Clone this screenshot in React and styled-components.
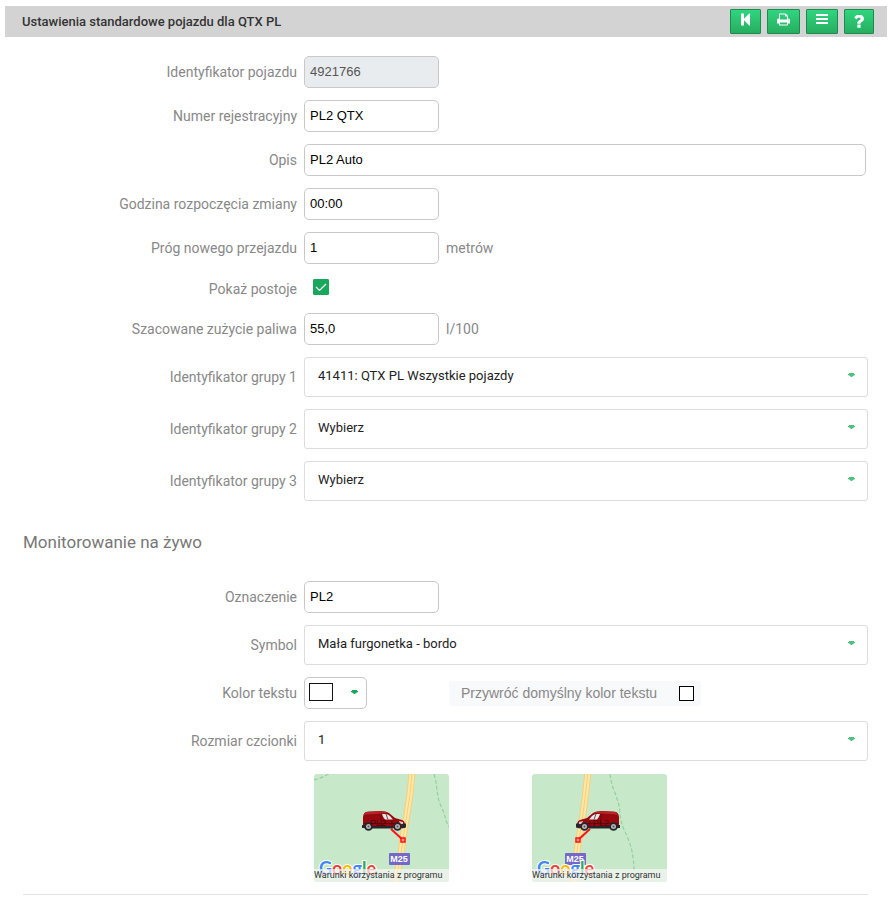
import React from 'react'
import styled, { createGlobalStyle } from 'styled-components'

const GlobalStyle = createGlobalStyle`
  * {
    box-sizing: border-box;
  }
  body {
    margin: 0;
    background: #fff;
    font-family: Roboto, 'Liberation Sans', sans-serif;
    font-size: 14px;
    color: #888;
  }
`
const Page = styled.div`
  padding: 6px 5px 0;
`
const Header = styled.header`
  display: flex;
  align-items: center;
  justify-content: space-between;
  height: 31px;
  padding: 0 13px 0 17px;
  background: #d3d3d3;
`
const Title = styled.h1`
  margin: 0;
  font-size: 13px;
  font-weight: 500;
  color: #333;
`
const Toolbar = styled.div`
  display: flex;
  gap: 6px;
`
const ToolButton = styled.button`
  display: flex;
  align-items: center;
  height: 25px;
  padding: ${props => (props.$low ? '0 9px' : '0 9px 4px')};
  border: 1px solid #1e8a4c;
  border-radius: 1px;
  background: linear-gradient(#2fd57f, #27ae60);
  color: #fff;
`
const Form = styled.form`
  display: flex;
  flex-direction: column;
  gap: 12px;
  padding: 19px 19px 0 18px;
`
const Row = styled.div`
  display: grid;
  grid-template-columns: 274px 1fr;
  column-gap: 7px;
  align-items: center;
  min-height: ${props => (props.$short ? '25px' : '32px')};
`
const Label = styled.label`
  text-align: right;
  font-size: 14px;
  line-height: 20px;
`
const Field = styled.div`
  display: flex;
  align-items: center;
`
const TextBox = styled.input`
  width: ${props => (props.$wide ? '100%' : '135px')};
  height: 32px;
  margin-right: ${props => (props.$wide ? '2px' : '7px')};
  padding: 0 5px 2px;
  border: 1px solid #c8c8c8;
  border-radius: 5px;
  background: #fff;
  color: #000;
  font-family: 'Liberation Sans', Arial, sans-serif;
  font-size: 13px;
  &:disabled {
    background: #e9ecef;
    color: #555;
  }
`
const SelectBox = styled.div`
  display: grid;
  align-items: center;
  width: 100%;
  & > * {
    grid-area: 1 / 1;
  }
  & > svg {
    justify-self: end;
    margin: 0 13px 4px 0;
    color: #4fc07f;
    pointer-events: none;
  }
`
const Select = styled.select`
  appearance: none;
  width: 100%;
  height: 40px;
  padding: 0 30px 4px 13px;
  border: 1px solid #dcdcdc;
  border-radius: 3px;
  background: #fff;
  color: #222;
  font-family: Roboto, 'Liberation Sans', sans-serif;
  font-size: 13px;
`
const TickBox = styled.span`
  display: grid;
  place-items: center;
  margin: 0 0 4px 9px;
  & > * {
    grid-area: 1 / 1;
  }
  & > svg {
    pointer-events: none;
  }
`
const Tick = styled.input`
  appearance: none;
  width: 16px;
  height: 16px;
  margin: 0;
  border-radius: 1px;
  border: 1px solid #18a85c;
  &:checked {
    background: #18a85c;
  }
`
const SectionTitle = styled.h2`
  margin: 18px 0 16px;
  font-size: 17px;
  font-weight: 400;
  line-height: 22px;
  color: #777;
`
const ColorButton = styled.button`
  display: flex;
  align-items: center;
  justify-content: space-between;
  width: 63px;
  height: 32px;
  padding: 0 8px 2px 4px;
  border: 1px solid #c8c8c8;
  border-radius: 5px;
  background: #fff;
  color: #18a85c;
`
const Swatch = styled.span`
  width: 24px;
  height: 18px;
  border: 1px solid #111;
  background: #fff;
`
const ResetColor = styled.label`
  display: flex;
  align-items: center;
  gap: 22px;
  height: 25px;
  margin-left: 82px;
  padding: 0 7px 0 12px;
  border-radius: 3px;
  background: #f8f9fb;
  font-family: 'Liberation Sans', Arial, sans-serif;
  font-size: 14px;
`
const PlainTick = styled.input`
  appearance: none;
  width: 15px;
  height: 15px;
  margin: 0;
  border: 1px solid #000;
  background: #fff;
`
const Maps = styled.div`
  display: flex;
  gap: 83px;
  margin-top: 1px;
  padding-left: 291px;
`
const MapCard = styled.div`
  position: relative;
  width: 135px;
  height: 108px;
  border-radius: 3px;
  overflow: hidden;
  & > svg {
    display: block;
  }
`
const Terms = styled.a`
  position: absolute;
  left: 0;
  right: 0;
  bottom: 0;
  height: 13px;
  background: rgba(245, 245, 245, 0.7);
  color: #333;
  font-family: Roboto, 'Open Sans', sans-serif;
  font-size: 9px;
  line-height: 13px;
  white-space: nowrap;
  text-decoration: none;
`
const Divider = styled.hr`
  width: 100%;
  margin: 0;
  border: 0;
  border-top: 1px solid #e3e3e3;
`

const Caret = () => (
  <svg width='7' height='4' viewBox='0 0 7 4' fill='currentColor'>
    <path d='M1 0h5v1h1v1L5 3L4 4H3L2 3L0 2V1h1z' />
  </svg>
)

const BackIcon = () => (
  <svg width='11' height='13' viewBox='0 0 11 13' fill='currentColor'>
    <path d='M1 .5h3v5.200L9.200.6q.8-.4.8.4v11q0 1-.8.4L4 7.300v5.200H1z' />
  </svg>
)

const PrintIcon = () => (
  <svg width='13' height='13' viewBox='0 64 1664 1664' fill='currentColor'>
    <path d='M384 1536h896v-256h-896v256zM384 896h896v-384h-160q-40 0-68-28t-28-68v-160h-640v640zM1536 960q0-26-19-45t-45-19-45 19-19 45 19 45 45 19 45-19 19-45zM1664 960v416q0 13-9.500 22.500t-22.500 9.500h-224v160q0 40-28 68t-68 28h-960q-40 0-68-28t-28-68v-160h-224q-13 0-22.500-9.500t-9.500-22.500v-416q0-79 56.500-135.500t135.500-56.500h64v-544q0-40 28-68t68-28h672q40 0 88 20t76 48l152 152q28 28 48 76t20 88v256h64q79 0 135.500 56.500t56.500 135.500z' />
  </svg>
)

const MenuIcon = () => (
  <svg width='12' height='11' viewBox='0 0 12 11' fill='currentColor'>
    <path d='M0 0h12v2H0zM0 4h12v2H0zM0 8h12v2H0z' />
  </svg>
)

const HelpIcon = () => (
  <svg width='10' height='13' viewBox='64 256 960 1216' fill='currentColor'>
    <path d='M704 1192v240q0 16-12 28t-28 12h-240q-16 0-28-12t-12-28v-240q0-16 12-28t28-12h240q16 0 28 12t12 28zM1020 592q0 54-15.500 101t-35 76.500-55 59.500-57.500 43.500-61 35.500q-41 23-68.500 65t-27.500 67q0 17-12 32.500t-28 15.500h-240q-15 0-25.500-18.500t-10.500-37.500v-45q0-83 65-156.500t143-108.500q59-27 84-56t25-76q0-42-46.500-74t-107.500-32q-65 0-108 29-35 25-107 115-13 16-31 16-12 0-25-8l-164-125q-13-10-15.500-25t5.500-28q160-266 464-266 80 0 161 31t146 83 106 127.500 41 158.500z' />
  </svg>
)

const CheckIcon = () => (
  <svg width='12' height='10' viewBox='0 0 12 10' fill='none' stroke='#fff'>
    <path d='M1 5l3.500 3.500L11 2' strokeWidth='1.200' />
  </svg>
)

// Drawn facing right, 44 x 20
const Van = () => (
  <>
    <path
      d='M1 15V6Q1.500 1 5 .7L18 0q6 0 9 2l6 5 7 2q3 1 3 5v2l-2 1H2z'
      fill='#98090f'
    />
    <path d='M2 4Q3 1 6 .8L18 .2q5 0 8 1.800L4 3.500z' fill='#b8252b' />
    <path d='M20 3h3q3 0 5 2l3 3.500h-8q-2-2-3-5.500z' fill='#ece4e6' />
    <path d='M24 3l2 5.500' stroke='#555' strokeWidth='1' />
    <path d='M2 12.500h32M19 3v12M30 9v6' stroke='#5a060a' strokeWidth='.8' />
    <path d='M0 14h3v3H0zM10 15h21v2.500H10zM40 13l4-.5v4l-4 1z' fill='#26262c' />
    <path d='M37 10l4 1v2h-3z' fill='#d8c8ca' />
    <circle cx='6.500' cy='15.500' r='4.300' fill='#25252a' />
    <circle cx='6.500' cy='15.500' r='2.500' fill='#b5b5ba' />
    <circle cx='6.500' cy='15.500' r='1' fill='#55555a' />
    <circle cx='35.500' cy='15.500' r='4.300' fill='#25252a' />
    <circle cx='35.500' cy='15.500' r='2.500' fill='#b5b5ba' />
    <circle cx='35.500' cy='15.500' r='1' fill='#55555a' />
  </>
)

const MapPicture = ({ road, trails, van, flip, target, from, sign, logo, tag }) => (
  <svg width='135' height='108' viewBox='0 0 135 108'>
    <rect width='135' height='108' fill='#c8e9c9' />
    <g fill='none'>
      {trails.map(trail => (
        <path
          key={trail}
          d={trail}
          stroke='#92d0a0'
          strokeWidth='1.200'
          strokeDasharray='4 2'
        />
      ))}
      <path d={road} stroke='#f5cf78' strokeWidth='7' />
      <path d={road} stroke='#fde7a8' strokeWidth='5' />
      <path d={road} stroke='#f5cf78' strokeWidth='1' />
    </g>
    <path
      d={`M${from[0]} ${from[1]}L${target[0]} ${target[1]}`}
      stroke='#f11'
      strokeWidth='2'
    />
    <rect
      x={target[0] - 2}
      y={target[1] - 2}
      width='4'
      height='4'
      fill='#f99'
      stroke='#f11'
      strokeWidth='1.500'
    />
    <g transform={`translate(${van[0]} ${van[1]})${flip ? ' scale(-1 1)' : ''}`}>
      <Van />
    </g>
    <text
      x={tag}
      y='52'
      fontFamily='Liberation Sans, sans-serif'
      fontSize='9'
      fill='#4a0407'
    >
      PL2
    </text>
    <rect x={sign[0]} y={sign[1]} width='21' height='12' rx='1' fill='#7468c8' />
    <text
      x={sign[0] + 10}
      y={sign[1] + 9}
      textAnchor='middle'
      fontFamily='Liberation Sans, sans-serif'
      fontSize='9'
      fontWeight='700'
      fill='#fff'
    >
      M25
    </text>
    <text
      x={logo}
      y='101'
      fontFamily='Lato, sans-serif'
      fontSize='18'
      fontWeight='700'
      stroke='#fff'
      strokeWidth='2'
      paintOrder='stroke'
    >
      <tspan fill='#4285f4'>G</tspan>
      <tspan fill='#ea4335'>o</tspan>
      <tspan fill='#fbbc05'>o</tspan>
      <tspan fill='#4285f4'>g</tspan>
      <tspan fill='#34a853'>l</tspan>
      <tspan fill='#ea4335'>e</tspan>
    </text>
  </svg>
)

const maps = [
  {
    road: 'M98 -2Q97 18 93 40T87 80L81 110',
    trails: ['M0 6Q8 4 16 -1', 'M120 0C124 12 122 22 127 32S131 48 136 54'],
    van: [48, 37],
    target: [89, 66],
    from: [77, 55],
    sign: [75, 79],
    logo: 5,
    tag: 56,
  },
  {
    road: 'M56 -2Q54 18 51 40T46 70L41 110',
    trails: ['M78 0C80 18 87 22 88 40S102 64 102 98'],
    van: [88, 37],
    flip: true,
    target: [46, 66],
    from: [58, 55],
    sign: [33, 79],
    logo: 5,
    tag: 61,
  },
]

function InputRow({ id, label, value, unit, wide, disabled }) {
  return (
    <Row>
      <Label htmlFor={id}>{label}</Label>
      <Field>
        <TextBox id={id} defaultValue={value} $wide={wide} disabled={disabled} />
        {unit}
      </Field>
    </Row>
  )
}

function SelectRow({ id, label, value }) {
  return (
    <Row>
      <Label htmlFor={id}>{label}</Label>
      <SelectBox>
        <Select id={id}>
          <option>{value}</option>
        </Select>
        <Caret />
      </SelectBox>
    </Row>
  )
}

function App() {
  return (
    <Page>
      <GlobalStyle />
      <Header>
        <Title>Ustawienia standardowe pojazdu dla QTX PL</Title>
        <Toolbar>
          <ToolButton aria-label='Wstecz'>
            <BackIcon />
          </ToolButton>
          <ToolButton aria-label='Drukuj'>
            <PrintIcon />
          </ToolButton>
          <ToolButton aria-label='Menu'>
            <MenuIcon />
          </ToolButton>
          <ToolButton aria-label='Pomoc' $low>
            <HelpIcon />
          </ToolButton>
        </Toolbar>
      </Header>
      <Form>
        <InputRow id='vehicle' label='Identyfikator pojazdu' value='4921766' disabled />
        <InputRow id='plate' label='Numer rejestracyjny' value='PL2 QTX' />
        <InputRow id='description' label='Opis' value='PL2 Auto' wide />
        <InputRow id='shift' label='Godzina rozpoczęcia zmiany' value='00:00' />
        <InputRow id='trip' label='Próg nowego przejazdu' value='1' unit='metrów' />
        <Row $short>
          <Label htmlFor='stops'>Pokaż postoje</Label>
          <Field>
            <TickBox>
              <Tick id='stops' type='checkbox' defaultChecked />
              <CheckIcon />
            </TickBox>
          </Field>
        </Row>
        <InputRow id='fuel' label='Szacowane zużycie paliwa' value='55,0' unit='l/100' />
        <SelectRow
          id='group1'
          label='Identyfikator grupy 1'
          value='41411: QTX PL Wszystkie pojazdy'
        />
        <SelectRow id='group2' label='Identyfikator grupy 2' value='Wybierz' />
        <SelectRow id='group3' label='Identyfikator grupy 3' value='Wybierz' />
        <SectionTitle>Monitorowanie na żywo</SectionTitle>
        <InputRow id='tag' label='Oznaczenie' value='PL2' />
        <SelectRow id='symbol' label='Symbol' value='Mała furgonetka - bordo' />
        <Row>
          <Label htmlFor='color'>Kolor tekstu</Label>
          <Field>
            <ColorButton id='color' type='button'>
              <Swatch />
              <Caret />
            </ColorButton>
            <ResetColor>
              Przywróć domyślny kolor tekstu
              <PlainTick type='checkbox' />
            </ResetColor>
          </Field>
        </Row>
        <SelectRow id='size' label='Rozmiar czcionki' value='1' />
        <Maps>
          {maps.map(map => (
            <MapCard key={map.road}>
              <MapPicture {...map} />
              <Terms href='#terms'>Warunki korzystania z programu</Terms>
            </MapCard>
          ))}
        </Maps>
        <Divider />
      </Form>
    </Page>
  )
}

export default App
